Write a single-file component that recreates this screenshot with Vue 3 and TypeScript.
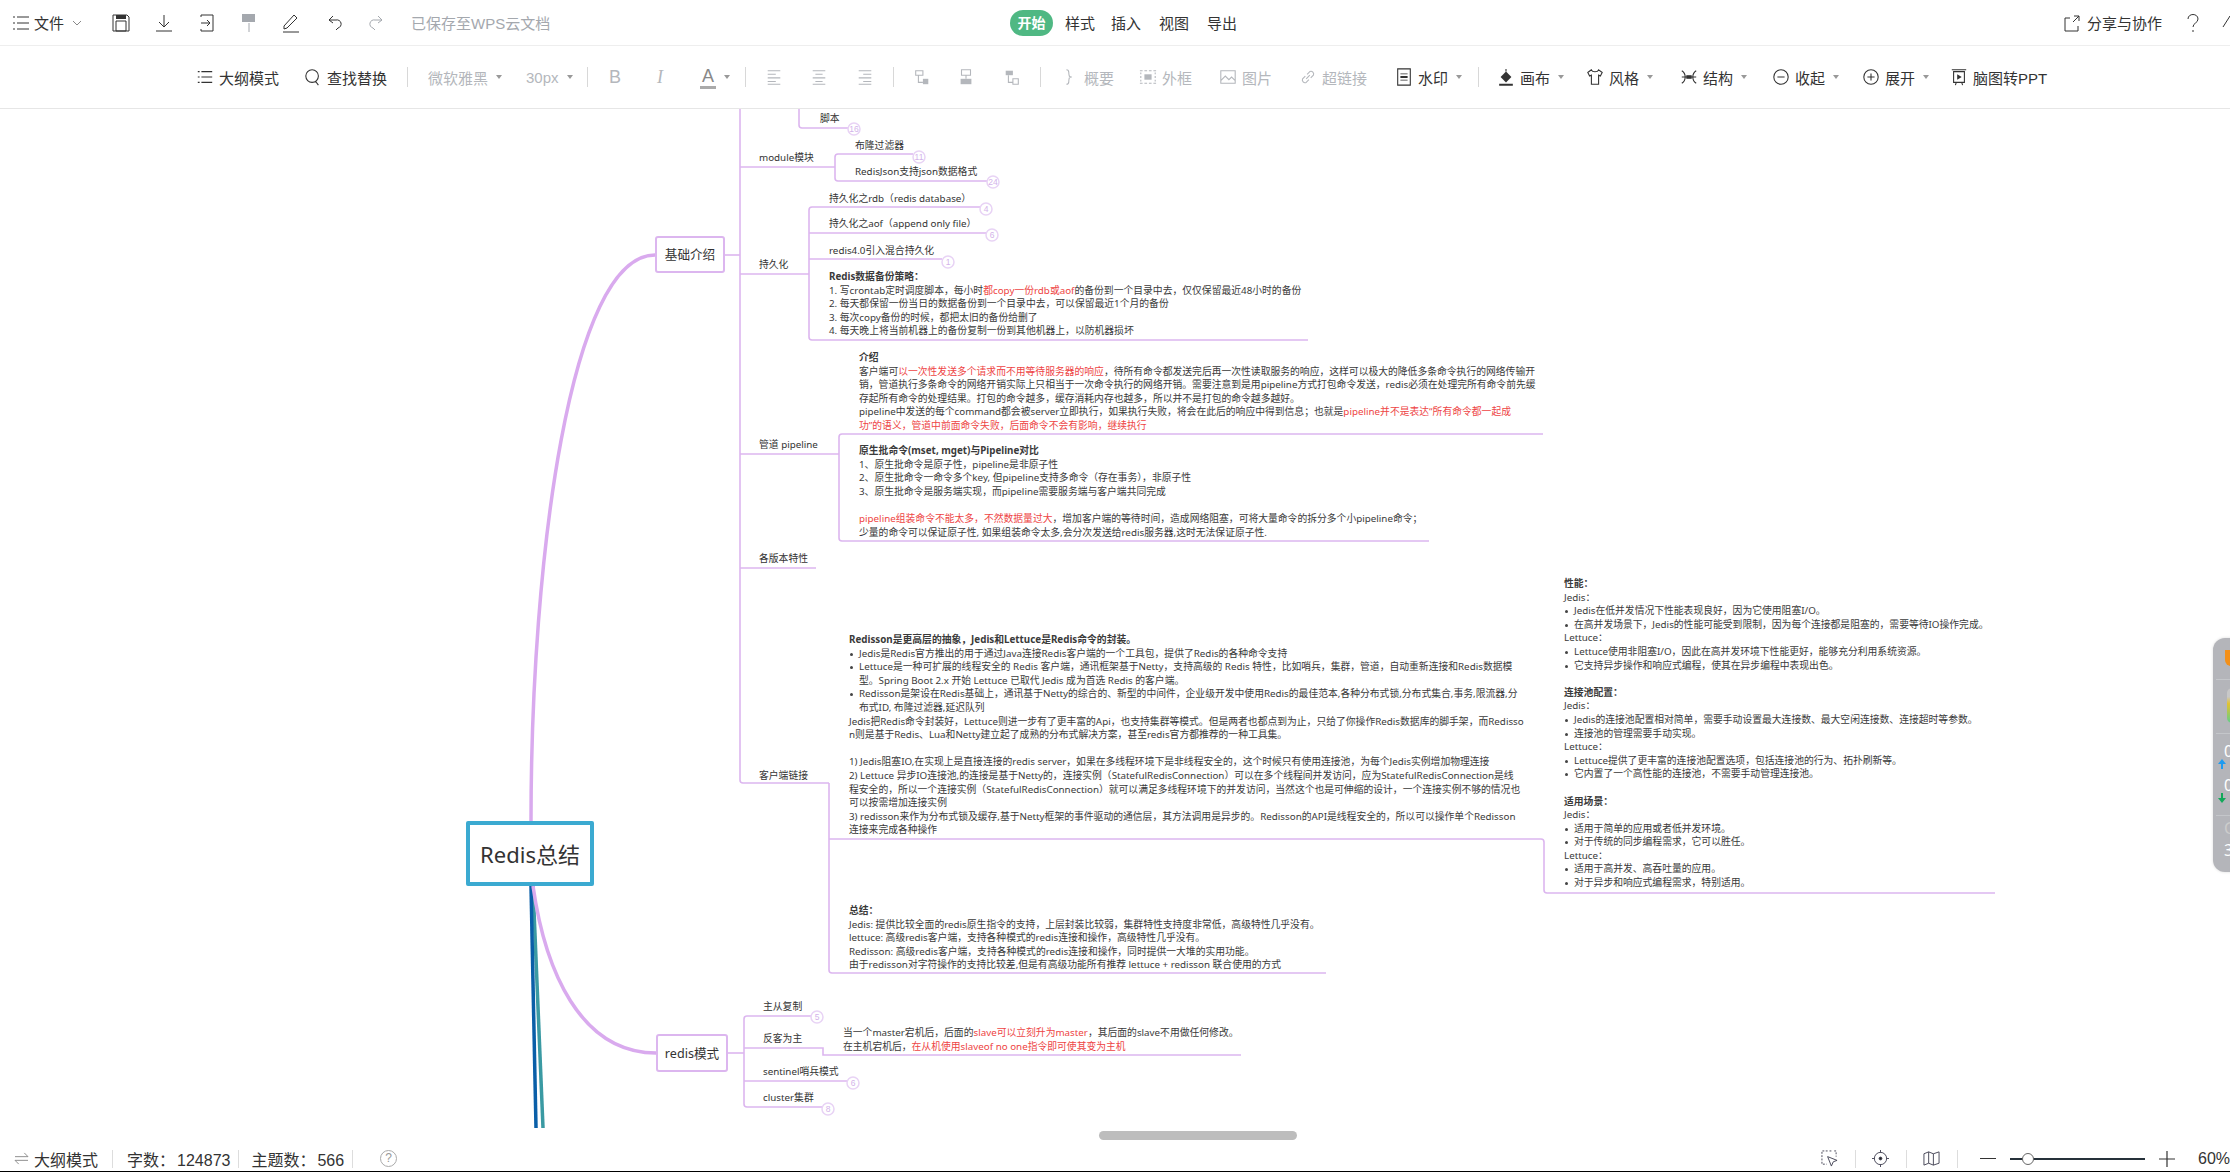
<template>
  <div class="app">
    <header class="topbar">
      <div
        v-for="item in topItems"
        :key="item.x"
        class="cell"
        :class="{ dim: item.dim }"
        :style="{ width: item.w + 'px' }"
      >
        <svg v-if="item.icon" class="ic" viewBox="0 0 20 20">
          <path :d="icons[item.icon]" />
          <path v-if="fills[item.icon]" class="solid" :d="fills[item.icon]" />
        </svg>
        <span v-if="item.label" :class="{ pill: item.pill }">{{ item.label }}</span>
        <svg v-if="item.chev" class="chev" viewBox="0 0 10 6"><path d="M1 1l4 4 4-4" /></svg>
      </div>
    </header>

    <nav class="toolbar">
      <template v-for="item in toolItems" :key="item.x">
        <div class="cell" :class="{ dim: item.dim }" :style="{ width: item.w + 'px' }">
          <i v-if="item.sep" class="sep"></i>
          <svg v-if="item.icon" class="ic" viewBox="0 0 20 20">
            <path :d="icons[item.icon]" />
            <path v-if="fills[item.icon]" class="solid" :d="fills[item.icon]" />
          </svg>
          <span v-if="item.label" :class="item.cls">{{ item.label }}</span>
          <i v-if="item.caret" class="caret"></i>
        </div>
      </template>
    </nav>

    <main class="canvas">
      <svg class="wires" width="2230" height="1033" viewBox="0 109 2230 1033">
        <path class="curve teal" d="M533 886L543 1128" />
        <path class="curve blue" d="M531 886L536 1128" />
        <path class="curve" d="M531 821C531 560 570 255 655 255" />
        <path class="curve" d="M533 886C545 970 580 1053 656 1053" />
        <path v-for="d in wires" :key="d" class="wire" :d="d" />
        <g v-for="b in badges" :key="b.x">
          <circle class="badge" :cx="b.x" :cy="b.y" r="6" />
          <text class="badge-num" :x="b.x" :y="b.y + 3">{{ b.n }}</text>
        </g>
      </svg>

      <div class="root-node">Redis总结</div>
      <div class="main-node base">基础介绍</div>
      <div class="main-node mode">redis模式</div>

      <div
        v-for="n in labels"
        :key="n.t"
        class="label"
        :style="{ left: n.x + 'px', top: n.y - 116 + 'px' }"
      >{{ fw(n.t) }}</div>

      <div
        v-for="block in parsedBlocks"
        :key="block.x + '-' + block.y"
        class="block"
        :style="{ left: block.x + 'px', top: block.y - 116 + 'px' }"
      >
        <div
          v-for="(line, i) in block.lines"
          :key="i"
          class="line"
          :class="{ bold: line.bold, bullet: line.bullet, indent: line.indent }"
        >
          <span v-for="(seg, j) in line.segs" :key="j" :class="{ red: j % 2 === 1 }">{{ seg }}</span>
        </div>
      </div>

      <div class="hscroll"></div>

      <aside class="float-panel">
        <div class="shield"></div>
        <hr />
        <div class="meter"></div>
        <hr />
        <div class="num first">0</div>
        <svg class="arrow" viewBox="0 0 8 10"><path fill="#1e9bf0" d="M4 0l4 5H5v5H3V5H0z" /></svg>
        <div class="num">0</div>
        <svg class="arrow last" viewBox="0 0 8 10"><path fill="#12a85a" d="M4 10L0 5h3V0h2v5h3z" /></svg>
        <hr />
        <div class="num faint">C</div>
        <div class="num">3</div>
      </aside>
    </main>

    <footer class="status">
      <div class="status-left">
        <svg class="swap" viewBox="0 0 16 14"><path d="M1 5h14L11 1M15 9H1l4 4" /></svg>
        <span>大纲模式</span>
        <i class="vsep"></i>
        <span class="count">{{ fw('字数:') }}<b>124873</b></span>
        <i class="vsep tight"></i>
        <span class="count">{{ fw('主题数:') }}<b>566</b></span>
        <i class="vsep tight"></i>
        <span class="help">?</span>
      </div>
      <div class="status-right">
        <svg class="st-ic" viewBox="0 0 18 18">
          <path d="M7 1H1v14h5M9 1h3M14 1h2v6" stroke-dasharray="2 1.5" />
          <path d="M7 7l10 4-4 1.5L11 17z" />
        </svg>
        <i class="vsep"></i>
        <svg class="st-ic" viewBox="0 0 18 18">
          <circle cx="9" cy="9" r="6.5" />
          <circle class="dot" cx="9" cy="9" r="1.5" />
          <path d="M9 0v3M9 15v3M0 9h3M15 9h3" />
        </svg>
        <i class="vsep"></i>
        <svg class="st-ic" viewBox="0 0 18 18">
          <path d="M1 4l5-2 5 2 6-2v12l-6 2-5-2-5 2zM6 2v12M11 4v12" />
        </svg>
        <i class="vsep wide"></i>
        <i class="zoom-minus"></i>
        <div class="slider"><i class="thumb"></i></div>
        <svg class="zoom-plus" viewBox="0 0 16 16"><path d="M0 8h16M8 0v16" /></svg>
        <span class="pct">60%</span>
      </div>
    </footer>
  </div>
</template>

<script setup lang="ts">
import { computed } from 'vue';

interface BarItem {
  x: number;
  icon?: string;
  label?: string;
  dim?: boolean;
  pill?: boolean;
  chev?: boolean;
  caret?: boolean;
  sep?: boolean;
  cls?: string;
}

interface TextBlock {
  x: number;
  y: number;
  lines: string[];
}

// 数据里写半角,这里统一转全角标点;反引号表示保留半角逗号
const fw = (text: string) =>
  text
    .replace(/,/g, '\uFF0C')
    .replace(/`/g, ',')
    .replace(/;/g, '\uFF1B')
    .replace(/:(?! )/g, '\uFF1A')
    .replace(/\(([^()]*)\)/g, (all, inner: string) =>
      inner.includes('mset') ? all : '\uFF08' + inner + '\uFF09',
    );

const icons: Record<string, string> = {
  menu: 'M2 4h2M6 4h12M2 10h2M6 10h12M2 16h2M6 16h12',
  save: 'M2 2h14l2 2v14H2zM5 8h10v10H5z',
  download: 'M10 2v12M5 9l5 5 5-5M2 18h16',
  exportFile: 'M4 2h12v16H4M4 2v2M4 16v2M4 10h9M10 7l3 3-3 3',
  paint: 'M10 10v9',
  pen: 'M13 2l3 3-10 10-3 1 0-3zM2 19h16',
  undo: 'M8 3L4 7l4 3M4 7h7a4 4 0 0 1 2 8l-2 2',
  redo: 'M12 3l4 4-4 3M16 7H9a4 4 0 0 0-2 8l2 2',
  share: 'M12 3h5v5M17 3l-6 6M8 5H3v13h13v-5',
  help: 'M5 6c0-6 10-6 10 0 0 4-5 4-5 8M10 17v2',
  up: 'M1 14L8 3l7 11',
  search: 'M9 2a7 7 0 1 0 0 14a7 7 0 1 0 0-14zM13 15l3 4',
  alignL: 'M3 3h14M3 7h9M3 11h14M3 15h9M3 18h14',
  alignC: 'M3 3h14M6 7h8M3 11h14M6 15h8M3 18h14',
  alignR: 'M3 3h14M8 7h9M3 11h14M8 15h9M3 18h14',
  sub: 'M3 3h8v5H3zM6 8v8h5',
  sibling: 'M5 2h10v6H5zM10 8v4',
  parent: 'M6 8v8h5M11 12h6v6h-6z',
  brace: 'M6 2c4 0 2 3 3 6 0 1 1 2 3 2-2 0-3 1-3 2-1 3 1 6-3 6',
  frame: 'M1 3h3M6 3h3M11 3h3M16 3h3M1 17h3M6 17h3M11 17h3M16 17h3M2 5v2M2 9v2M2 13v2M18 5v2M18 9v2M18 13v2',
  image: 'M2 3h16v14H2zM2 14l5-5 4 4 3-3 4 4',
  link: 'M8 12l4-4M7 9l-3 3a3 3 0 0 0 4 4l3-3M9 7l3-3a3 3 0 0 1 4 4l-3 3',
  watermark: 'M3 1h14v18H3z',
  bucket: 'M10 1v3M3 18h14v1H3z',
  shirt: 'M6 2L2 5l2 4 2-1v10h8V8l2 1 2-4-4-3c-1 3-7 3-8 0z',
  structure: 'M2 3c5 3 5 11 0 14M18 3c-5 3-5 11 0 14M2 10h16',
  collapse: 'M10 2a8 8 0 1 0 0 16a8 8 0 1 0 0-16zM6 10h8',
  expand: 'M10 2a8 8 0 1 0 0 16a8 8 0 1 0 0-16zM6 10h8M10 6v8',
  ppt: 'M4 4h12v12H4zM2 2h16M7 16l-1 3M13 16l1 3',
};

const fills: Record<string, string> = {
  save: 'M5 2h10v4H5z',
  paint: 'M3 1h13v8H3z',
  sub: 'M11 12h6v6h-6z',
  sibling: 'M4 12h12v6H4z',
  parent: 'M3 3h8v5H3z',
  frame: 'M6 7h8v6H6z',
  watermark: 'M6 6h8v1H6zM6 9h8v2H6zM6 13h8v1H6z',
  bucket: 'M10 4l6 6-6 6-6-6z',
  structure: 'M7 8h6v4H7z',
  ppt: 'M8 7l5 3-5 3z',
};

const withWidths = (items: BarItem[], end: number) =>
  items.map((item, i) => ({
    ...item,
    w: (i + 1 < items.length ? items[i + 1].x : end) - item.x,
  }));

const topItems = withWidths(
  [
    { x: 11, icon: 'menu' },
    { x: 34, label: '文件', chev: true },
    { x: 111, icon: 'save' },
    { x: 154, icon: 'download' },
    { x: 197, icon: 'exportFile' },
    { x: 239, icon: 'paint', dim: true },
    { x: 281, icon: 'pen' },
    { x: 325, icon: 'undo' },
    { x: 366, icon: 'redo', dim: true },
    { x: 411, label: '已保存至WPS云文档', dim: true },
    { x: 1010, label: '开始', pill: true },
    { x: 1065, label: '样式' },
    { x: 1111, label: '插入' },
    { x: 1159, label: '视图' },
    { x: 1207, label: '导出' },
    { x: 2062, icon: 'share', label: '分享与协作' },
    { x: 2183, icon: 'help' },
    { x: 2222, icon: 'up' },
  ],
  2240,
);

const toolItems = withWidths(
  [
    { x: 196, icon: 'menu', label: '大纲模式' },
    { x: 304, icon: 'search', label: '查找替换' },
    { x: 407, sep: true },
    { x: 428, label: '微软雅黑', dim: true, caret: true },
    { x: 526, label: '30px', dim: true, caret: true },
    { x: 587, sep: true },
    { x: 609, label: 'B', dim: true, cls: 'glyph' },
    { x: 657, label: 'I', dim: true, cls: 'glyph ital' },
    { x: 700, label: 'A', dim: true, cls: 'glyph under', caret: true },
    { x: 745, sep: true },
    { x: 765, icon: 'alignL', dim: true },
    { x: 810, icon: 'alignC', dim: true },
    { x: 856, icon: 'alignR', dim: true },
    { x: 893, sep: true },
    { x: 913, icon: 'sub', dim: true },
    { x: 957, icon: 'sibling', dim: true },
    { x: 1003, icon: 'parent', dim: true },
    { x: 1040, sep: true },
    { x: 1061, icon: 'brace', label: '概要', dim: true },
    { x: 1139, icon: 'frame', label: '外框', dim: true },
    { x: 1219, icon: 'image', label: '图片', dim: true },
    { x: 1299, icon: 'link', label: '超链接', dim: true },
    { x: 1395, icon: 'watermark', label: '水印', caret: true },
    { x: 1478, sep: true },
    { x: 1497, icon: 'bucket', label: '画布', caret: true },
    { x: 1586, icon: 'shirt', label: '风格', caret: true },
    { x: 1680, icon: 'structure', label: '结构', caret: true },
    { x: 1772, icon: 'collapse', label: '收起', caret: true },
    { x: 1862, icon: 'expand', label: '展开', caret: true },
    { x: 1950, icon: 'ppt', label: '脑图转PPT' },
  ],
  2100,
);

const wires = [
  'M740 109V780q0 3 3 3H829',
  'M725 255H740',
  'M799 109V125q0 3 3 3H848',
  'M740 167H835',
  'M835 167V157q0-3 3-3H913',
  'M835 167V178q0 3 3 3H987',
  'M740 274H809',
  'M809 274V210q0-3 3-3H980',
  'M809 233H986',
  'M809 259H942',
  'M809 274V337q0 3 3 3H1308',
  'M740 454H839',
  'M839 454V437q0-3 3-3H1543',
  'M839 454V538q0 3 3 3H1429',
  'M740 568H816',
  'M829 783V970q0 3 3 3H1326',
  'M829 839H1541q3 0 3 3V890q0 3 3 3H1995',
  'M728 1053H744',
  'M744 1104V1019q0-3 3-3H811',
  'M744 1104q0 3 3 3H822',
  'M744 1048H823V1055H1241',
  'M744 1081H847',
];

const badges = [
  { x: 854, y: 129, n: 16 },
  { x: 919, y: 157, n: 11 },
  { x: 993, y: 182, n: 24 },
  { x: 986, y: 209, n: 4 },
  { x: 992, y: 235, n: 6 },
  { x: 948, y: 262, n: 1 },
  { x: 817, y: 1017, n: 5 },
  { x: 853, y: 1083, n: 6 },
  { x: 828, y: 1109, n: 8 },
];

const labels = [
  { x: 820, y: 119, t: '脚本' },
  { x: 759, y: 158, t: 'module模块' },
  { x: 855, y: 146, t: '布隆过滤器' },
  { x: 855, y: 172, t: 'RedisJson支持json数据格式' },
  { x: 759, y: 265, t: '持久化' },
  { x: 829, y: 199, t: '持久化之rdb(redis database)' },
  { x: 829, y: 224, t: '持久化之aof(append only file)' },
  { x: 829, y: 251, t: 'redis4.0引入混合持久化' },
  { x: 759, y: 445, t: '管道 pipeline' },
  { x: 759, y: 559, t: '各版本特性' },
  { x: 759, y: 776, t: '客户端链接' },
  { x: 763, y: 1007, t: '主从复制' },
  { x: 763, y: 1039, t: '反客为主' },
  { x: 763, y: 1072, t: 'sentinel哨兵模式' },
  { x: 763, y: 1098, t: 'cluster集群' },
];

// 行首标记:# 粗体,* 列表项,~ 列表续行,{} 内为红字
const blocks: TextBlock[] = [
  {
    x: 829,
    y: 277,
    lines: [
      '#Redis数据备份策略:',
      '1. 写crontab定时调度脚本,每小时{都copy一份rdb或aof}的备份到一个目录中去,仅仅保留最近48小时的备份',
      '2. 每天都保留一份当日的数据备份到一个目录中去,可以保留最近1个月的备份',
      '3. 每次copy备份的时候,都把太旧的备份给删了',
      '4. 每天晚上将当前机器上的备份复制一份到其他机器上,以防机器损坏',
    ],
  },
  {
    x: 859,
    y: 358,
    lines: [
      '#介绍',
      '客户端可{以一次性发送多个请求而不用等待服务器的响应},待所有命令都发送完后再一次性读取服务的响应,这样可以极大的降低多条命令执行的网络传输开',
      '销,管道执行多条命令的网络开销实际上只相当于一次命令执行的网络开销。需要注意到是用pipeline方式打包命令发送,redis必须在处理完所有命令前先缓',
      '存起所有命令的处理结果。打包的命令越多,缓存消耗内存也越多,所以并不是打包的命令越多越好。',
      'pipeline中发送的每个command都会被server立即执行,如果执行失败,将会在此后的响应中得到信息;也就是{pipeline并不是表达“所有命令都一起成}',
      '{功”的语义,管道中前面命令失败,后面命令不会有影响,继续执行}',
    ],
  },
  {
    x: 859,
    y: 451,
    lines: [
      '#原生批命令(mset` mget)与Pipeline对比',
      '1、原生批命令是原子性,pipeline是非原子性',
      '2、原生批命令一命令多个key` 但pipeline支持多命令(存在事务),非原子性',
      '3、原生批命令是服务端实现,而pipeline需要服务端与客户端共同完成',
      '',
      '{pipeline组装命令不能太多,不然数据量过大},增加客户端的等待时间,造成网络阻塞,可将大量命令的拆分多个小pipeline命令;',
      '少量的命令可以保证原子性` 如果组装命令太多`会分次发送给redis服务器`这时无法保证原子性.',
    ],
  },
  {
    x: 849,
    y: 640,
    lines: [
      '#Redisson是更高层的抽象,Jedis和Lettuce是Redis命令的封装。',
      '*Jedis是Redis官方推出的用于通过Java连接Redis客户端的一个工具包,提供了Redis的各种命令支持',
      '*Lettuce是一种可扩展的线程安全的 Redis 客户端,通讯框架基于Netty,支持高级的 Redis 特性,比如哨兵,集群,管道,自动重新连接和Redis数据模',
      '~型。Spring Boot 2.x 开始 Lettuce 已取代 Jedis 成为首选 Redis 的客户端。',
      '*Redisson是架设在Redis基础上,通讯基于Netty的综合的、新型的中间件,企业级开发中使用Redis的最佳范本`各种分布式锁`分布式集合`事务`限流器`分',
      '~布式ID` 布隆过滤器`延迟队列',
      'Jedis把Redis命令封装好,Lettuce则进一步有了更丰富的Api,也支持集群等模式。但是两者也都点到为止,只给了你操作Redis数据库的脚手架,而Redisso',
      'n则是基于Redis、Lua和Netty建立起了成熟的分布式解决方案,甚至redis官方都推荐的一种工具集。',
      '',
      '1) Jedis阻塞IO`在实现上是直接连接的redis server,如果在多线程环境下是非线程安全的,这个时候只有使用连接池,为每个Jedis实例增加物理连接',
      '2) Lettuce 异步IO连接池`的连接是基于Netty的,连接实例(StatefulRedisConnection)可以在多个线程间并发访问,应为StatefulRedisConnection是线',
      '程安全的,所以一个连接实例(StatefulRedisConnection)就可以满足多线程环境下的并发访问,当然这个也是可伸缩的设计,一个连接实例不够的情况也',
      '可以按需增加连接实例',
      '3) redisson来作为分布式锁及缓存`基于Netty框架的事件驱动的通信层,其方法调用是异步的。Redisson的API是线程安全的,所以可以操作单个Redisson',
      '连接来完成各种操作',
    ],
  },
  {
    x: 849,
    y: 911,
    lines: [
      '#总结:',
      'Jedis: 提供比较全面的redis原生指令的支持,上层封装比较弱,集群特性支持度非常低,高级特性几乎没有。',
      'lettuce: 高级redis客户端,支持各种模式的redis连接和操作,高级特性几乎没有。',
      'Redisson: 高级redis客户端,支持各种模式的redis连接和操作,同时提供一大堆的实用功能。',
      '由于redisson对字符操作的支持比较差`但是有高级功能所有推荐 lettuce + redisson 联合使用的方式',
    ],
  },
  {
    x: 1564,
    y: 584,
    lines: [
      '#性能:',
      'Jedis:',
      '*Jedis在低并发情况下性能表现良好,因为它使用阻塞I/O。',
      '*在高并发场景下,Jedis的性能可能受到限制,因为每个连接都是阻塞的,需要等待IO操作完成。',
      'Lettuce:',
      '*Lettuce使用非阻塞I/O,因此在高并发环境下性能更好,能够充分利用系统资源。',
      '*它支持异步操作和响应式编程,使其在异步编程中表现出色。',
      '',
      '#连接池配置:',
      'Jedis:',
      '*Jedis的连接池配置相对简单,需要手动设置最大连接数、最大空闲连接数、连接超时等参数。',
      '*连接池的管理需要手动实现。',
      'Lettuce:',
      '*Lettuce提供了更丰富的连接池配置选项,包括连接池的行为、拓扑刷新等。',
      '*它内置了一个高性能的连接池,不需要手动管理连接池。',
      '',
      '#适用场景:',
      'Jedis:',
      '*适用于简单的应用或者低并发环境。',
      '*对于传统的同步编程需求,它可以胜任。',
      'Lettuce:',
      '*适用于高并发、高吞吐量的应用。',
      '*对于异步和响应式编程需求,特别适用。',
    ],
  },
  {
    x: 843,
    y: 1033,
    lines: [
      '当一个master宕机后,后面的{slave可以立刻升为master},其后面的slave不用做任何修改。',
      '在主机宕机后,{在从机使用slaveof no one指令即可使其变为主机}',
    ],
  },
];

const parsedBlocks = computed(() =>
  blocks.map((block) => ({
    ...block,
    lines: block.lines.map((raw) => {
      const mark = raw.charAt(0);
      const text = raw && '#*~'.includes(mark) ? raw.slice(1) : raw;
      return {
        bold: mark === '#',
        bullet: mark === '*',
        indent: mark === '~',
        segs: fw(text).split(/[{}]/),
      };
    }),
  })),
);
</script>

<style>
html,
body {
  margin: 0;
  background: #fff;
}
</style>

<style scoped>
.app {
  width: 2230px;
  height: 1172px;
  display: flex;
  flex-direction: column;
  overflow: hidden;
  background: #fff;
  color: #333;
  font-family: "Liberation Sans", "Noto Sans CJK SC", sans-serif;
}

.topbar {
  height: 45px;
  flex: none;
  display: flex;
  padding-left: 11px;
  border-bottom: 1px solid #eee;
  font-size: 15px;
  box-sizing: content-box;
}

.topbar .ic {
  width: 20px;
  height: 20px;
  stroke-width: 1;
}

.toolbar {
  height: 62px;
  flex: none;
  display: flex;
  padding-left: 196px;
  border-bottom: 1px solid #e6e6e6;
  font-size: 15px;
}

.cell {
  flex: none;
  display: flex;
  align-items: center;
  gap: 5px;
  white-space: nowrap;
  color: #333;
}

.cell.dim {
  color: #a4a8ae;
}

.toolbar .cell.dim {
  color: #b4b7bc;
}

.ic {
  width: 18px;
  height: 18px;
  flex: none;
  fill: none;
  stroke: currentColor;
  stroke-width: 1.2;
}

.ic .solid {
  fill: currentColor;
  stroke: none;
}

.chev {
  width: 10px;
  height: 6px;
  margin-left: 3px;
  fill: none;
  stroke: #888;
}

.pill {
  display: block;
  width: 43px;
  height: 26px;
  line-height: 26px;
  border-radius: 13px;
  background: #4fb883;
  color: #fff;
  text-align: center;
  font-weight: 700;
  font-size: 14px;
}

.caret {
  width: 0;
  height: 0;
  margin-left: 3px;
  border-left: 3px solid transparent;
  border-right: 3px solid transparent;
  border-top: 4px solid #999;
}

.sep {
  width: 1px;
  height: 20px;
  background: #d8d8d8;
}

.glyph {
  font-size: 18px;
  font-weight: 400;
}

.ital {
  font-style: italic;
  font-family: "Liberation Serif", serif;
}

.under {
  border-bottom: 3px solid #aaa;
  line-height: 20px;
  padding: 0 2px;
  color: #888;
}

.canvas {
  position: relative;
  flex: 1;
  overflow: hidden;
  font-family: "Noto Sans", "Noto Sans CJK SC", sans-serif;
}

.wires {
  position: absolute;
  left: 0;
  top: 0;
  fill: none;
}

.wire {
  stroke: #dcb6ef;
  stroke-width: 1.6;
}

.curve {
  stroke: #d9aaee;
  stroke-width: 3.5;
  fill: none;
}

.curve.blue {
  stroke: #0a5fa8;
}

.curve.teal {
  stroke: #3a9aa3;
}

.badge {
  fill: #fff;
  stroke: #e8d3f5;
  stroke-width: 1.5;
}

.badge-num {
  fill: #d3b3ea;
  font-size: 8.5px;
  text-anchor: middle;
  font-family: "Liberation Sans", sans-serif;
}

.root-node {
  position: absolute;
  left: 466px;
  top: 712px;
  width: 128px;
  height: 65px;
  box-sizing: border-box;
  border: 4px solid #3baad1;
  border-radius: 2px;
  background: #fff;
  font-size: 22px;
  padding-bottom: 2px;
  display: flex;
  align-items: center;
  justify-content: center;
}

.main-node {
  position: absolute;
  box-sizing: border-box;
  border: 2px solid #dcb6ef;
  border-radius: 3px;
  background: #fff;
  font-size: 12.6px;
  padding-bottom: 2px;
  display: flex;
  align-items: center;
  justify-content: center;
}

.base {
  left: 655px;
  top: 127px;
  width: 70px;
  height: 37px;
}

.mode {
  left: 656px;
  top: 925px;
  width: 72px;
  height: 38px;
}

.label {
  position: absolute;
  font-size: 9.8px;
  line-height: 14px;
  white-space: nowrap;
}

.block {
  position: absolute;
  font-size: 9.8px;
  line-height: 13.6px;
  color: #3a3a3a;
}

.line {
  height: 13.6px;
  white-space: nowrap;
}

.line.bold {
  font-weight: 700;
}

.line.bullet {
  position: relative;
  padding-left: 10px;
}

.line.bullet::before {
  content: "";
  position: absolute;
  left: 1px;
  top: 6px;
  width: 3px;
  height: 3px;
  border-radius: 50%;
  background: #444;
}

.line.indent {
  padding-left: 10px;
}

.red {
  color: #ee4444;
}

.hscroll {
  position: absolute;
  left: 1099px;
  top: 1022px;
  width: 198px;
  height: 9px;
  border-radius: 5px;
  background: #bdbdbd;
}

.float-panel {
  position: absolute;
  left: 2213px;
  top: 529px;
  width: 40px;
  height: 234px;
  box-sizing: border-box;
  padding: 12px 0 0 4px;
  border-radius: 12px;
  background: #b4b5ba;
  color: #fff;
  font-size: 16px;
  box-shadow: 0 0 3px rgba(0, 0, 0, 0.15);
}

.float-panel hr {
  margin: 0 0 0 -1px;
  border: 0;
  border-top: 1px solid #c4c6ca;
}

.shield {
  width: 14px;
  height: 16px;
  margin: 0 0 13px 8px;
  background: #f39019;
  border-radius: 0 0 6px 6px;
}

.meter {
  width: 12px;
  height: 35px;
  margin: 8px 0 10px 10px;
  border-radius: 5px;
  background: linear-gradient(#c8c8c8 25%, #e4c22e 45%, #5fd08a);
}

.num {
  margin-left: 7px;
  height: 20px;
  line-height: 20px;
}

.num.first {
  margin-top: 7px;
}

.num.faint {
  color: #ccc;
  margin-top: 2px;
  margin-bottom: 2px;
}

.arrow {
  display: block;
  width: 8px;
  height: 10px;
  margin: -2px 0 6px 1px;
}

.arrow.last {
  margin-bottom: 12px;
}

.status {
  height: 30px;
  flex: none;
  box-sizing: border-box;
  padding-top: 4px;
  display: flex;
  justify-content: space-between;
  align-items: center;
  border-bottom: 1px solid #000;
  background: #fff;
  font-size: 16px;
  font-family: "Liberation Sans", "Noto Sans CJK SC", sans-serif;
}

.status-left,
.status-right {
  display: flex;
  align-items: center;
}

.status-left {
  padding-left: 14px;
}

.swap {
  width: 15px;
  height: 13px;
  margin-right: 5px;
  fill: none;
  stroke: #888;
}

.vsep {
  width: 1px;
  height: 18px;
  margin: 0 14px;
  background: #ddd;
}

.vsep.tight {
  margin-left: 8px;
  margin-right: 12px;
}

.count b {
  font-weight: 400;
  margin-left: 2px;
}

.help {
  width: 15px;
  height: 15px;
  margin-left: 15px;
  border: 1px solid #aaa;
  border-radius: 50%;
  color: #999;
  font-size: 12px;
  line-height: 15px;
  text-align: center;
}

.st-ic {
  width: 17px;
  height: 17px;
  fill: none;
  stroke: #445;
  stroke-width: 1;
}

.st-ic .dot {
  fill: #222;
}

.status-right .vsep {
  margin: 0 16px 0 17px;
}

.status-right .vsep.wide {
  margin-right: 22px;
}

.zoom-minus {
  width: 16px;
  height: 1px;
  background: #333;
}

.slider {
  position: relative;
  width: 135px;
  height: 2px;
  margin: 0 14px;
  background: #26313a;
}

.thumb {
  position: absolute;
  left: 12px;
  top: -5px;
  width: 10px;
  height: 10px;
  border: 1px solid #666;
  border-radius: 50%;
  background: #fff;
}

.zoom-plus {
  width: 16px;
  height: 16px;
  fill: none;
  stroke: #333;
  stroke-width: 1.2;
}

.pct {
  margin-left: 23px;
  width: 32px;
  white-space: nowrap;
}
</style>
